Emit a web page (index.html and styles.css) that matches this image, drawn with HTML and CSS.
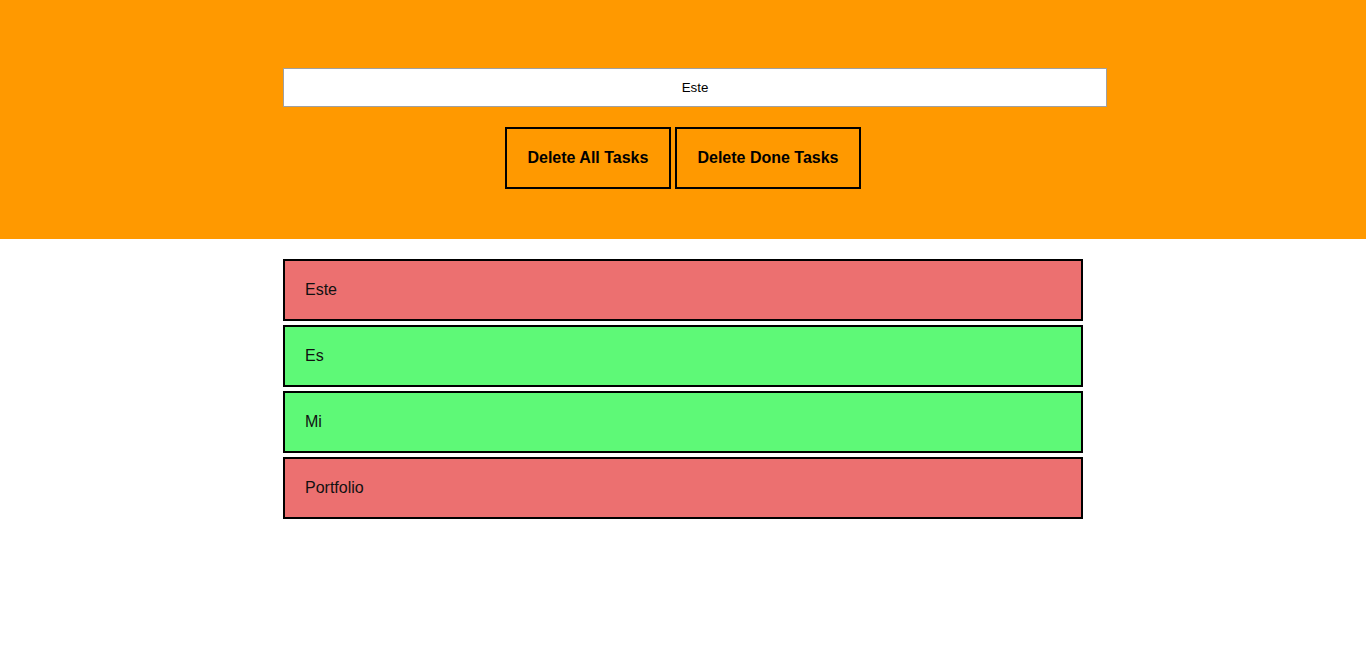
FILE: index.html
```html
<!DOCTYPE html>
<html>
<head>
<meta charset="utf-8">
<link rel="stylesheet" href="styles.css">
</head>
<body>
<header class="header">
  <div class="container">
    <input class="task-input" type="text" value="Este">
    <div class="actions">
      <button class="btn">Delete All Tasks</button>
      <button class="btn">Delete Done Tasks</button>
    </div>
  </div>
</header>
<main class="container list">
  <div class="task task-todo">Este</div>
  <div class="task task-done">Es</div>
  <div class="task task-done">Mi</div>
  <div class="task task-todo">Portfolio</div>
</main>
</body>
</html>
```
FILE: styles.css
```css
html, body {
  margin: 0;
  padding: 0;
  background: #fff;
  font-family: "Liberation Sans", Arial, sans-serif;
}
.header {
  background: #ff9900;
  height: 239px;
  padding-top: 68px;
  box-sizing: border-box;
}
.container {
  width: 800px;
  margin: 0 auto;
}
.task-input {
  display: block;
  width: 100%;
  box-sizing: content-box;
  height: 15px;
  padding: 11px 11px;
  border: 1px solid #a0a0a0;
  margin: 0;
  background: #fff;
  font-family: "Liberation Sans", Arial, sans-serif;
  font-size: 13.33px;
  color: #000;
  text-align: center;
  outline: none;
}
.actions {
  display: flex;
  justify-content: center;
  gap: 4px;
  margin-top: 20px;
}
.btn {
  background: transparent;
  border: 2px solid #000;
  padding: 20px 20.5px;
  margin: 0;
  font-family: "Liberation Sans", Arial, sans-serif;
  font-size: 16px;
  font-weight: bold;
  line-height: 18px;
  color: #000;
}
.list {
  display: flex;
  flex-direction: column;
  gap: 4px;
  margin-top: 20px;
}
.task {
  border: 2px solid #000;
  padding: 20px 20px;
  font-size: 16px;
  line-height: 18px;
  color: #111;
}
.task-todo { background: #ec7070; }
.task-done { background: #5ef977; }
```
